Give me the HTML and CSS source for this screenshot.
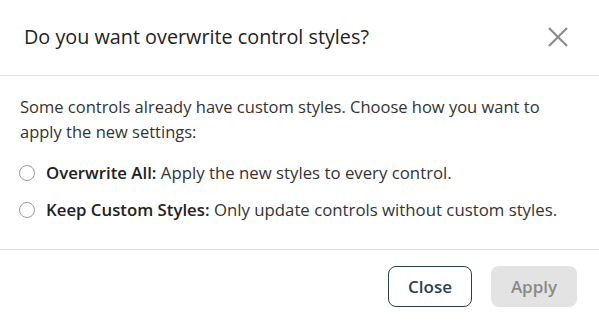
FILE: index.html
```html
<!DOCTYPE html>
<html>
<head>
<meta charset="utf-8">
<link rel="stylesheet" href="styles.css">
</head>
<body>
<div class="dialog">
  <div class="header">
    <h1 class="title">Do you want overwrite control styles?</h1>
    <button class="close-x" aria-label="Close">
      <svg width="20" height="20" viewBox="0 0 20 20"><path d="M1 1L19 19M19 1L1 19" stroke="#8c8c8c" stroke-width="2.2" fill="none"/></svg>
    </button>
  </div>
  <div class="body">
    <p class="desc">Some controls already have custom styles. Choose how you want to apply the new settings:</p>
    <label class="option"><span class="radio"></span><span><b>Overwrite All:</b> Apply the new styles to every control.</span></label>
    <label class="option"><span class="radio"></span><span><b>Keep Custom Styles:</b> Only update controls without custom styles.</span></label>
  </div>
  <div class="footer">
    <button class="btn btn-close">Close</button>
    <button class="btn btn-apply">Apply</button>
  </div>
</div>
</body>
</html>
```
FILE: styles.css
```css
html, body { margin: 0; padding: 0; background: #fff; }
body { font-family: "Open Sans", sans-serif; color: #333; }
.dialog { width: 599px; height: 323px; display: flex; flex-direction: column; }
.header { height: 76px; box-sizing: border-box; border-bottom: 1px solid #e2e2e2; display: flex; align-items: center; justify-content: space-between; padding: 0 31px 2px 24px; }
.title { margin: 0; font-size: 19.8px; font-weight: 400; color: #222; }
.close-x { border: 0; background: none; padding: 0; width: 20px; height: 20px; display: flex; }
.body { padding: 18px 20px 0; height: 174px; box-sizing: border-box; border-bottom: 1px solid #e2e2e2; }
.desc { margin: 0 0 10px; font-size: 16.5px; line-height: 25px; color: #333; }
.option { display: flex; align-items: center; gap: 11px; margin-left: -1px; font-size: 16.8px; line-height: 25px; height: 37px; color: #333; }
.option b { font-weight: 650; color: #222; }
.radio { width: 16px; height: 16px; border: 1px solid #9a9a9a; border-radius: 50%; box-sizing: border-box; flex: none; }
.footer { display: flex; justify-content: flex-end; gap: 19px; padding: 16px 22px 0 0; }
.btn { font-family: "Open Sans", sans-serif; font-size: 17px; font-weight: 600; height: 41px; border-radius: 8px; padding: 0; }
.btn-close { width: 84px; border: 1px solid #2c3e55; background: #fff; color: #2c3e55; }
.btn-apply { width: 86px; border: 0; background: #e3e3e3; color: #8a8a8a; }
```
